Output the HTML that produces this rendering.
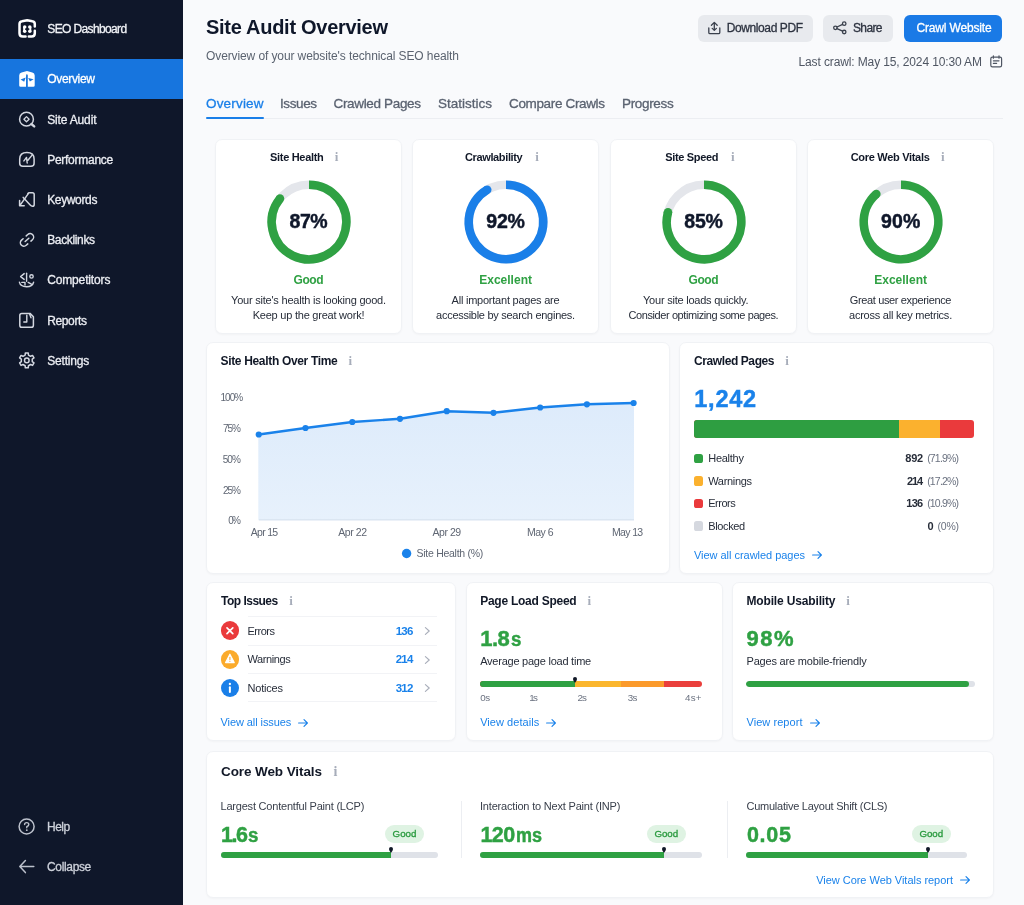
<!DOCTYPE html>
<html lang="en"><head><meta charset="utf-8"><title>SEO Dashboard - Site Audit Overview</title>
<style>
*{box-sizing:border-box;margin:0;padding:0}
html,body{width:1024px;height:905px;overflow:hidden}
body{will-change:transform;background:#f9fafc;font-family:"Liberation Sans",sans-serif;position:relative;color:#111827}
.t{position:absolute;white-space:pre;line-height:1;display:block}
.abs{position:absolute}
.md{-webkit-text-stroke:0.3px currentColor}
.hv{-webkit-text-stroke:0.45px currentColor}
svg{position:absolute;overflow:visible}
.sidebar{position:absolute;left:0;top:0;width:183px;height:905px;background:#0f172a}
.nav-active{position:absolute;left:0;top:59px;width:183px;height:40px;background:#1775de}
.card{position:absolute;background:#fff;border:1px solid #f0f2f5;border-radius:7px;box-shadow:0 1px 2px rgba(16,24,40,.03)}
.btn{position:absolute;top:14.5px;height:27.5px;border-radius:6px;background:#e8eaee}
.btn.primary{background:#1a7ae6}
.hr{position:absolute;height:1px;background:#f2f3f6}
.pill{position:absolute;height:17.5px;width:39px;border-radius:9px;background:#dff3e3}
.bar{position:absolute;height:5.5px;border-radius:3px;background:#dfe2e8;overflow:hidden}
.bar i{position:absolute;top:0;bottom:0;display:block}
</style></head><body>
<aside class="sidebar">
<div class="nav-active"></div>
<span class="t md" style="left:47.30px;top:23.00px;font-size:12px;color:#f1f3f7;letter-spacing:-0.633px;">SEO Dashboard</span>
<span class="t md" style="left:47.20px;top:73.00px;font-size:12px;color:#ffffff;letter-spacing:-0.317px;">Overview</span>
<span class="t md" style="left:47.20px;top:114.00px;font-size:12px;color:#eceef3;letter-spacing:-0.156px;">Site Audit</span>
<span class="t md" style="left:47.20px;top:154.00px;font-size:12px;color:#eceef3;letter-spacing:-0.270px;">Performance</span>
<span class="t md" style="left:47.20px;top:194.00px;font-size:12px;color:#eceef3;letter-spacing:-0.355px;">Keywords</span>
<span class="t md" style="left:47.20px;top:234.00px;font-size:12px;color:#eceef3;letter-spacing:-0.348px;">Backlinks</span>
<span class="t md" style="left:47.20px;top:274.00px;font-size:12px;color:#eceef3;letter-spacing:-0.149px;">Competitors</span>
<span class="t md" style="left:47.20px;top:315.00px;font-size:12px;color:#eceef3;letter-spacing:-0.372px;">Reports</span>
<span class="t md" style="left:47.20px;top:355.00px;font-size:12px;color:#eceef3;letter-spacing:-0.180px;">Settings</span>
<span class="t md" style="left:47.00px;top:821.00px;font-size:12px;color:#cdd1da;letter-spacing:-0.529px;">Help</span>
<span class="t md" style="left:47.00px;top:861.00px;font-size:12px;color:#cdd1da;letter-spacing:-0.343px;">Collapse</span>
<svg width="183" height="905" viewBox="0 0 183 905" fill="none" stroke="#d3d7e0" stroke-width="1.5" stroke-linecap="round" stroke-linejoin="round">
<!-- logo -->
<g stroke="#ffffff" stroke-width="2.5">
<path d="M34.8 26.6 V24 Q34.8 21.6 32.4 21.3 L27.2 20.2 L22 21.3 Q19.5 21.6 19.5 24 V33.2 Q19.5 36.5 22.8 36.5 H25.6"/>
<path d="M28.8 36.5 H31.6 Q34.8 36.5 34.8 33.2 V30.8"/>
</g>
<g fill="#ffffff" stroke="none">
<circle cx="24.7" cy="27" r="1.75"/><circle cx="24.7" cy="31.2" r="1.75"/><rect x="23.2" y="27" width="1.8" height="4.2"/>
<circle cx="29.8" cy="27" r="1.75"/><circle cx="29.8" cy="31.2" r="1.75"/><rect x="29.5" y="27" width="1.8" height="4.2"/>
</g>
<!-- overview (active) -->
<path d="M19.2 85.4 V75.6 Q19.2 73.1 21.6 72.5 L27 71 L32.3 72.5 Q34.7 73.1 34.7 75.6 V85.4 Q34.7 86.8 33.3 86.8 H20.6 Q19.2 86.8 19.2 85.4Z" fill="#ffffff" stroke="none"/>
<g fill="#1775de" stroke="none">
<path d="M26 75.6 Q26.9 72.4 27.8 75.6 V86.9 H26Z"/>
<path d="M20.6 79.4 L25.7 77.4 L24.2 81.8Z"/>
<path d="M33.6 79.3 L28.2 78.1 L29.9 81.4Z"/>
</g>
<!-- site audit -->
<circle cx="26.5" cy="119.2" r="6.9"/>
<path d="M26.5 116.6 L29.1 119.2 L26.5 121.8 L23.9 119.2Z" stroke-width="1.3"/>
<path d="M31.4 124 L34.2 126.4" stroke-width="2.4"/>
<!-- performance -->
<path d="M19.7 159 Q19.7 152.4 26.9 152.4 Q34.1 152.4 34.1 159 V163.2 Q34.1 166.2 31 166.2 H22.8 Q19.7 166.2 19.7 163.2Z"/>
<path d="M23.9 160.9 L26.5 157.4 L27.2 163 M27.9 160.3 L32.3 154.9" stroke-width="1.4"/>
<!-- keywords -->
<path d="M27.9 193.6 Q28.2 192.8 29.6 192.8 H32.4 Q34.2 192.8 34.2 194.6 V204.4 Q34.2 206.3 32.5 206.3 Q31.2 206.3 30.2 205.1 L23.2 197.4"/>
<path d="M28.3 193.6 L20 205.4 M19.6 200.6 V205.8 H24.2"/>
<!-- backlinks -->
<g transform="translate(27 239.9) rotate(-42) scale(0.7) translate(-12 -12)" stroke-width="2.15">
<path d="M15 7h3a5 5 0 0 1 5 5 5 5 0 0 1-5 5h-3m-6 0H6a5 5 0 0 1-5-5 5 5 0 0 1 5-5h3"/><path d="M8.5 12h7"/>
</g>
<!-- competitors -->
<g stroke-width="1.4">
<path d="M24.2 273.6 L20.6 276.6 L24.2 279.4"/>
<path d="M26.6 273.2 V281.2"/>
<circle cx="31.5" cy="276.4" r="1.7"/>
<path d="M19.4 282.2 Q20.4 286.8 26.6 286.8 Q32.4 286.8 33.6 282.2"/>
<path d="M21.8 282.4 H25 V285 M28.2 282.4 L31.4 284.2"/>
</g>
<!-- reports -->
<path d="M21.8 313.4 H30 L33.4 316.8 V325.2 Q33.4 327.3 31.3 327.3 H21.8 Q19.8 327.3 19.8 325.2 V315.4 Q19.8 313.4 21.8 313.4Z"/>
<path d="M26.8 315.2 V322 H23.8 M29.6 314 L31 317.8" stroke-width="1.4"/>
<!-- settings -->
<path d="M25.16 355.04 L25.35 352.94 L28.25 352.94 L28.44 355.04 L30.62 356.30 L32.54 355.41 L33.99 357.93 L32.26 359.14 L32.26 361.66 L33.99 362.87 L32.54 365.39 L30.62 364.50 L28.44 365.76 L28.25 367.86 L25.35 367.86 L25.16 365.76 L22.98 364.50 L21.06 365.39 L19.61 362.87 L21.34 361.66 L21.34 359.14 L19.61 357.93 L21.06 355.41 L22.98 356.30Z" stroke-width="1.5"/>
<circle cx="26.8" cy="360.4" r="2.3"/>
<!-- help -->
<g stroke="#bcc1cc">
<circle cx="26.6" cy="826.5" r="7.5"/>
<path d="M24.6 824.6 Q24.6 822.6 26.7 822.6 Q28.8 822.6 28.8 824.4 Q28.8 825.8 26.8 826.6 V827.8" stroke-width="1.4"/>
<circle cx="26.8" cy="830.2" r="0.9" fill="#bcc1cc" stroke="none"/>
<!-- collapse -->
<path d="M33.8 866.6 H20 M25.4 860.6 L19.8 866.6 L25.4 872.6"/>
</g>
</svg>
</aside>
<main>
<span class="t" style="left:206.00px;top:17.00px;font-size:20px;color:#0f172a;font-weight:700;letter-spacing:-0.283px;">Site Audit Overview</span>
<span class="t" style="left:206.00px;top:50.00px;font-size:12px;color:#5b6370;letter-spacing:-0.103px;">Overview of your website&#x27;s technical SEO health</span>
<div class="btn" style="left:698px;width:114.5px"></div>
<span class="t md" style="left:726.80px;top:22.00px;font-size:12px;color:#2d3340;letter-spacing:-0.409px;">Download PDF</span>
<div class="btn" style="left:823px;width:70px"></div>
<span class="t md" style="left:853.00px;top:22.00px;font-size:12px;color:#2d3340;letter-spacing:-0.633px;">Share</span>
<div class="btn primary" style="left:903.8px;width:98.7px"></div>
<span class="t md" style="left:916.50px;top:22.00px;font-size:12px;color:#ffffff;letter-spacing:-0.162px;">Crawl Website</span>
<span class="t" style="left:798.50px;top:56.00px;font-size:12px;color:#4f5663;letter-spacing:-0.123px;">Last crawl: May 15, 2024 10:30 AM</span>
<div class="hr" style="left:206px;top:118px;width:797px;background:#eceef2"></div>
<span class="t md" style="left:206.00px;top:97.00px;font-size:13.5px;color:#1a7fe8;letter-spacing:0.176px;">Overview</span>
<span class="t md" style="left:280.00px;top:97.00px;font-size:13.5px;color:#5a6270;letter-spacing:-0.406px;">Issues</span>
<span class="t md" style="left:333.50px;top:97.00px;font-size:13.5px;color:#5a6270;letter-spacing:-0.337px;">Crawled Pages</span>
<span class="t md" style="left:438.00px;top:97.00px;font-size:13.5px;color:#5a6270;">Statistics</span>
<span class="t md" style="left:509.00px;top:97.00px;font-size:13.5px;color:#5a6270;letter-spacing:-0.349px;">Compare Crawls</span>
<span class="t md" style="left:622.00px;top:97.00px;font-size:13.5px;color:#5a6270;letter-spacing:-0.333px;">Progress</span>
<div class="abs" style="left:206px;top:116.5px;width:58px;height:2px;background:#1a7fe8;border-radius:1px"></div>
<svg width="320" height="60" viewBox="690 10 320 60" style="left:690px;top:10px" fill="none" stroke="#3a404c" stroke-width="1.3" stroke-linecap="round" stroke-linejoin="round">
<path d="M708.8 28 V32.4 Q708.8 33.6 710 33.6 H718.6 Q719.8 33.6 719.8 32.4 V28"/>
<path d="M714.3 22.6 V30.2 M711.4 25.2 L714.3 22.4 L717.2 25.2 M712.2 28.4 L714.3 30.4 L716.4 28.4"/>
<circle cx="835.4" cy="27.8" r="1.75"/><circle cx="844.2" cy="23.7" r="1.75"/><circle cx="844.2" cy="32" r="1.75"/>
<path d="M837 27 L842.6 24.4 M837 28.6 L842.6 31.2"/>
<g stroke="#4f5663" stroke-width="1.2">
<rect x="990.8" y="57.2" width="10.8" height="9.6" rx="1.6"/>
<path d="M993.4 55.8 V58.2 M999 55.8 V58.2 M993.4 60.8 H999 M993.4 63.4 H996.6"/>
</g>
</svg>
<section class="card" style="left:215px;top:139px;width:187px;height:195px"></section>
<span class="t" style="left:270.00px;top:152.00px;font-size:11px;color:#111827;font-weight:700;letter-spacing:-0.306px;">Site Health</span>
<span class="t" style="left:334.70px;top:150.00px;font-size:13px;color:#a7adba;font-weight:700;font-family:'Liberation Serif',serif;">i</span>
<svg width="90" height="90" viewBox="263.60 176.60 90 90" style="left:263.60px;top:176.60px" fill="none"><circle cx="308.60" cy="221.6" r="37.3" stroke="#e4e6eb" stroke-width="8.4"/><path d="M308.60 184.30 A37.3 37.3 0 1 1 279.56 198.19" stroke="#2fa143" stroke-width="8.6"/><circle cx="279.56" cy="198.19" r="4.3" fill="#2fa143"/></svg>
<span class="t hv" style="left:289.50px;top:212.00px;font-size:19.5px;color:#0f172a;font-weight:700;letter-spacing:-0.416px;">87%</span>
<span class="t" style="left:293.60px;top:274.00px;font-size:12px;color:#2fa143;font-weight:700;letter-spacing:-0.443px;">Good</span>
<span class="t" style="left:231.10px;top:295.00px;font-size:11px;color:#272d39;letter-spacing:-0.222px;">Your site&#x27;s health is looking good.</span>
<span class="t" style="left:252.70px;top:310.00px;font-size:11px;color:#272d39;letter-spacing:-0.227px;">Keep up the great work!</span>
<section class="card" style="left:412px;top:139px;width:187px;height:195px"></section>
<span class="t" style="left:465.00px;top:152.00px;font-size:11px;color:#111827;font-weight:700;letter-spacing:-0.368px;">Crawlability</span>
<span class="t" style="left:535.20px;top:150.00px;font-size:13px;color:#a7adba;font-weight:700;font-family:'Liberation Serif',serif;">i</span>
<svg width="90" height="90" viewBox="460.60 176.60 90 90" style="left:460.60px;top:176.60px" fill="none"><circle cx="505.60" cy="221.6" r="37.3" stroke="#e4e6eb" stroke-width="8.4"/><path d="M505.60 184.30 A37.3 37.3 0 1 1 486.81 189.38" stroke="#1a7fe8" stroke-width="8.6"/><circle cx="486.81" cy="189.38" r="4.3" fill="#1a7fe8"/></svg>
<span class="t hv" style="left:486.30px;top:212.00px;font-size:19.5px;color:#0f172a;font-weight:700;letter-spacing:-0.216px;">92%</span>
<span class="t" style="left:479.20px;top:274.00px;font-size:12px;color:#2fa143;font-weight:700;letter-spacing:0.012px;">Excellent</span>
<span class="t" style="left:451.60px;top:295.00px;font-size:11px;color:#272d39;letter-spacing:-0.233px;">All important pages are</span>
<span class="t" style="left:436.10px;top:310.00px;font-size:11px;color:#272d39;letter-spacing:-0.277px;">accessible by search engines.</span>
<section class="card" style="left:610px;top:139px;width:187px;height:195px"></section>
<span class="t" style="left:665.30px;top:152.00px;font-size:11px;color:#111827;font-weight:700;letter-spacing:-0.339px;">Site Speed</span>
<span class="t" style="left:731.00px;top:150.00px;font-size:13px;color:#a7adba;font-weight:700;font-family:'Liberation Serif',serif;">i</span>
<svg width="90" height="90" viewBox="658.60 176.60 90 90" style="left:658.60px;top:176.60px" fill="none"><circle cx="703.60" cy="221.6" r="37.3" stroke="#e4e6eb" stroke-width="8.4"/><path d="M703.60 184.30 A37.3 37.3 0 1 1 667.59 211.87" stroke="#2fa143" stroke-width="8.6"/><circle cx="667.59" cy="211.87" r="4.3" fill="#2fa143"/></svg>
<span class="t hv" style="left:684.30px;top:212.00px;font-size:19.5px;color:#0f172a;font-weight:700;letter-spacing:-0.216px;">85%</span>
<span class="t" style="left:688.60px;top:274.00px;font-size:12px;color:#2fa143;font-weight:700;letter-spacing:-0.443px;">Good</span>
<span class="t" style="left:643.00px;top:295.00px;font-size:11px;color:#272d39;letter-spacing:-0.225px;">Your site loads quickly.</span>
<span class="t" style="left:628.60px;top:310.00px;font-size:11px;color:#272d39;letter-spacing:-0.421px;">Consider optimizing some pages.</span>
<section class="card" style="left:807px;top:139px;width:187px;height:195px"></section>
<span class="t" style="left:850.70px;top:152.00px;font-size:11px;color:#111827;font-weight:700;letter-spacing:-0.303px;">Core Web Vitals</span>
<span class="t" style="left:941.00px;top:150.00px;font-size:13px;color:#a7adba;font-weight:700;font-family:'Liberation Serif',serif;">i</span>
<svg width="90" height="90" viewBox="855.60 176.60 90 90" style="left:855.60px;top:176.60px" fill="none"><circle cx="900.60" cy="221.6" r="37.3" stroke="#e4e6eb" stroke-width="8.4"/><path d="M900.60 184.30 A37.3 37.3 0 1 1 875.93 193.62" stroke="#2fa143" stroke-width="8.6"/><circle cx="875.93" cy="193.62" r="4.3" fill="#2fa143"/></svg>
<span class="t hv" style="left:880.90px;top:212.00px;font-size:19.5px;color:#0f172a;font-weight:700;letter-spacing:0.184px;">90%</span>
<span class="t" style="left:874.20px;top:274.00px;font-size:12px;color:#2fa143;font-weight:700;letter-spacing:0.012px;">Excellent</span>
<span class="t" style="left:849.70px;top:295.00px;font-size:11px;color:#272d39;letter-spacing:-0.352px;">Great user experience</span>
<span class="t" style="left:849.00px;top:310.00px;font-size:11px;color:#272d39;letter-spacing:-0.227px;">across all key metrics.</span>
<section class="card" style="left:206px;top:342px;width:464px;height:232px"></section>
<span class="t" style="left:220.50px;top:355.00px;font-size:12px;color:#111827;font-weight:700;letter-spacing:-0.331px;">Site Health Over Time</span>
<span class="t" style="left:348.50px;top:354.00px;font-size:13px;color:#a7adba;font-weight:700;font-family:'Liberation Serif',serif;">i</span>
<span class="t" style="left:220.50px;top:393.00px;font-size:10px;color:#5f6673;letter-spacing:-0.959px;">100%</span>
<span class="t" style="left:223.00px;top:424.00px;font-size:10px;color:#5f6673;letter-spacing:-1.108px;">75%</span>
<span class="t" style="left:222.80px;top:455.00px;font-size:10px;color:#5f6673;letter-spacing:-1.008px;">50%</span>
<span class="t" style="left:223.00px;top:486.00px;font-size:10px;color:#5f6673;letter-spacing:-1.108px;">25%</span>
<span class="t" style="left:228.20px;top:516.00px;font-size:10px;color:#5f6673;letter-spacing:-1.853px;">0%</span>
<svg width="1024" height="905" viewBox="0 0 1024 905" style="left:0;top:0" fill="none"><defs><linearGradient id="ga" x1="0" y1="400" x2="0" y2="520" gradientUnits="userSpaceOnUse"><stop offset="0" stop-color="#ddebfb"/><stop offset="1" stop-color="#e7f1fc"/></linearGradient></defs><path d="M258.3 434.6 L258.75 434.5 L305.5 428 L352.3 422 L400 418.8 L446.75 411.2 L493.5 412.8 L540.2 407.5 L586.9 404.3 L633.6 403 L634 403 L634 519.8 L258.3 519.8Z" fill="url(#ga)"/><path d="M258.75 519.9 H634" stroke="#cfdcec" stroke-width="1"/><path d="M258.75 434.5 L305.5 428 L352.3 422 L400 418.8 L446.75 411.2 L493.5 412.8 L540.2 407.5 L586.9 404.3 L633.6 403" stroke="#1a82ea" stroke-width="2.4" stroke-linejoin="round" stroke-linecap="round"/><g fill="#1a82ea"><circle cx="258.75" cy="434.5" r="3.1"/><circle cx="305.5" cy="428" r="3.1"/><circle cx="352.3" cy="422" r="3.1"/><circle cx="400" cy="418.8" r="3.1"/><circle cx="446.75" cy="411.2" r="3.1"/><circle cx="493.5" cy="412.8" r="3.1"/><circle cx="540.2" cy="407.5" r="3.1"/><circle cx="586.9" cy="404.3" r="3.1"/><circle cx="633.6" cy="403" r="3.1"/></g><circle cx="406.6" cy="553.5" r="4.7" fill="#1a82ea"/></svg>
<span class="t" style="left:250.80px;top:527.00px;font-size:10.5px;color:#5f6673;letter-spacing:-0.708px;">Apr 15</span>
<span class="t" style="left:338.20px;top:527.00px;font-size:10.5px;color:#5f6673;letter-spacing:-0.427px;">Apr 22</span>
<span class="t" style="left:432.50px;top:527.00px;font-size:10.5px;color:#5f6673;letter-spacing:-0.448px;">Apr 29</span>
<span class="t" style="left:527.00px;top:527.00px;font-size:10.5px;color:#5f6673;letter-spacing:-0.523px;">May 6</span>
<span class="t" style="left:612.00px;top:527.00px;font-size:10.5px;color:#5f6673;letter-spacing:-0.647px;">May 13</span>
<span class="t" style="left:416.50px;top:548.00px;font-size:10.5px;color:#5f6673;letter-spacing:-0.272px;">Site Health (%)</span>
<section class="card" style="left:679px;top:342px;width:315px;height:232px"></section>
<span class="t" style="left:694.00px;top:355.00px;font-size:12px;color:#111827;font-weight:700;letter-spacing:-0.406px;">Crawled Pages</span>
<span class="t" style="left:785.20px;top:354.00px;font-size:13px;color:#a7adba;font-weight:700;font-family:'Liberation Serif',serif;">i</span>
<span class="t hv" style="left:694.20px;top:388.00px;font-size:23.5px;color:#1a82ea;font-weight:700;letter-spacing:0.797px;">1,242</span>
<div class="abs" style="left:694px;top:420px;width:280px;height:18px;border-radius:3px;overflow:hidden;background:#ea3a3c"><i class="abs" style="left:0;top:0;height:18px;width:204.8px;background:#2e9e41"></i><i class="abs" style="left:204.8px;top:0;height:18px;width:41.2px;background:#fbb12e"></i></div>
<i class="abs" style="left:694px;top:453.9px;width:9.2px;height:9.2px;border-radius:2.6px;background:#2fa143"></i>
<span class="t" style="left:708.20px;top:453.00px;font-size:11px;color:#272d39;letter-spacing:-0.249px;">Healthy</span>
<span class="t" style="left:905.20px;top:453.00px;font-size:11px;color:#272d39;font-weight:700;letter-spacing:-0.180px;">892</span>
<span class="t" style="left:927.20px;top:453.00px;font-size:10.5px;color:#6b7280;letter-spacing:-0.828px;">(71.9%)</span>
<i class="abs" style="left:694px;top:476.4px;width:9.2px;height:9.2px;border-radius:2.6px;background:#fbb12e"></i>
<span class="t" style="left:708.20px;top:476.00px;font-size:11px;color:#272d39;letter-spacing:-0.323px;">Warnings</span>
<span class="t" style="left:907.00px;top:476.00px;font-size:11px;color:#272d39;font-weight:700;letter-spacing:-1.080px;">214</span>
<span class="t" style="left:927.20px;top:476.00px;font-size:10.5px;color:#6b7280;letter-spacing:-0.828px;">(17.2%)</span>
<i class="abs" style="left:694px;top:498.9px;width:9.2px;height:9.2px;border-radius:2.6px;background:#ea3a3c"></i>
<span class="t" style="left:708.20px;top:498.00px;font-size:11px;color:#272d39;letter-spacing:-0.471px;">Errors</span>
<span class="t" style="left:906.20px;top:498.00px;font-size:11px;color:#272d39;font-weight:700;letter-spacing:-0.680px;">136</span>
<span class="t" style="left:927.20px;top:498.00px;font-size:10.5px;color:#6b7280;letter-spacing:-0.828px;">(10.9%)</span>
<i class="abs" style="left:694px;top:521.4px;width:9.2px;height:9.2px;border-radius:2.6px;background:#d5d8df"></i>
<span class="t" style="left:708.20px;top:521.00px;font-size:11px;color:#272d39;letter-spacing:-0.357px;">Blocked</span>
<span class="t" style="left:927.50px;top:521.00px;font-size:11px;color:#272d39;font-weight:700;">0</span>
<span class="t" style="left:937.50px;top:521.00px;font-size:10.5px;color:#6b7280;letter-spacing:-0.224px;">(0%)</span>
<span class="t" style="left:694.00px;top:550.00px;font-size:11px;color:#1a82ea;letter-spacing:-0.033px;">View all crawled pages</span>
<svg width="12" height="10" viewBox="0 0 12 10" style="left:811.6px;top:550.3px" fill="none" stroke="#1a82ea" stroke-width="1.15" stroke-linecap="round" stroke-linejoin="round"><path d="M0.6 5 H9.2 M6.0 1.6 L9.4 5 L6.0 8.4"/></svg>
<section class="card" style="left:206px;top:582px;width:250px;height:159px"></section>
<span class="t" style="left:221.00px;top:595.00px;font-size:12px;color:#111827;font-weight:700;letter-spacing:-0.511px;">Top Issues</span>
<span class="t" style="left:289.20px;top:594.00px;font-size:13px;color:#a7adba;font-weight:700;font-family:'Liberation Serif',serif;">i</span>
<div class="hr" style="left:247.5px;top:615.5px;width:189px"></div>
<div class="hr" style="left:247.5px;top:644.5px;width:189px"></div>
<div class="hr" style="left:247.5px;top:673.0px;width:189px"></div>
<div class="hr" style="left:247.5px;top:701.3px;width:189px"></div>
<i class="abs" style="left:220.5px;top:621.4px;width:18.8px;height:18.8px;border-radius:50%;background:#ea3a3c"></i>
<span class="t" style="left:247.50px;top:626.00px;font-size:11px;color:#272d39;letter-spacing:-0.491px;">Errors</span>
<span class="t" style="left:395.80px;top:626.00px;font-size:11.5px;color:#1a82ea;font-weight:700;letter-spacing:-0.844px;">136</span>
<svg width="8" height="10" viewBox="0 0 8 10" style="left:423.6px;top:625.8px" fill="none" stroke="#a9aeba" stroke-width="1.15" stroke-linecap="round" stroke-linejoin="round"><path d="M1.4 1.6 L5.2 5 L1.4 8.4"/></svg>
<i class="abs" style="left:220.5px;top:650.1px;width:18.8px;height:18.8px;border-radius:50%;background:#fbab2b"></i>
<span class="t" style="left:247.50px;top:654.00px;font-size:11px;color:#272d39;letter-spacing:-0.395px;">Warnings</span>
<span class="t" style="left:395.80px;top:654.00px;font-size:11.5px;color:#1a82ea;font-weight:700;letter-spacing:-0.844px;">214</span>
<svg width="8" height="10" viewBox="0 0 8 10" style="left:423.6px;top:654.5px" fill="none" stroke="#a9aeba" stroke-width="1.15" stroke-linecap="round" stroke-linejoin="round"><path d="M1.4 1.6 L5.2 5 L1.4 8.4"/></svg>
<i class="abs" style="left:220.5px;top:678.6px;width:18.8px;height:18.8px;border-radius:50%;background:#1a7fe8"></i>
<span class="t" style="left:247.50px;top:683.00px;font-size:11px;color:#272d39;letter-spacing:-0.198px;">Notices</span>
<span class="t" style="left:395.80px;top:683.00px;font-size:11.5px;color:#1a82ea;font-weight:700;letter-spacing:-0.844px;">312</span>
<svg width="8" height="10" viewBox="0 0 8 10" style="left:423.6px;top:683.0px" fill="none" stroke="#a9aeba" stroke-width="1.15" stroke-linecap="round" stroke-linejoin="round"><path d="M1.4 1.6 L5.2 5 L1.4 8.4"/></svg>
<svg width="20" height="80" viewBox="220 620 20 80" style="left:220px;top:620px" fill="none" stroke="#fff" stroke-width="1.7" stroke-linecap="round"><path d="M227 627.9 L232.8 633.7 M232.8 627.9 L227 633.7"/><path d="M229.9 654.2 L234.2 662.6 H225.6Z" fill="#fff" stroke-width="1.2" stroke-linejoin="round"/><path d="M229.9 657.4 V659.6" stroke="#fbab2b" stroke-width="1.1"/><circle cx="229.9" cy="661.3" r="0.6" fill="#fbab2b" stroke="none"/><circle cx="229.9" cy="684" r="1.15" fill="#fff" stroke="none"/><path d="M229.9 687.2 V692" stroke-width="2"/></svg>
<span class="t" style="left:220.50px;top:717.00px;font-size:11px;color:#1a82ea;letter-spacing:-0.082px;">View all issues</span>
<svg width="12" height="10" viewBox="0 0 12 10" style="left:298px;top:717.6px" fill="none" stroke="#1a82ea" stroke-width="1.15" stroke-linecap="round" stroke-linejoin="round"><path d="M0.6 5 H9.2 M6.0 1.6 L9.4 5 L6.0 8.4"/></svg>
<section class="card" style="left:466px;top:582px;width:257px;height:159px"></section>
<span class="t" style="left:480.20px;top:595.00px;font-size:12px;color:#111827;font-weight:700;letter-spacing:-0.252px;">Page Load Speed</span>
<span class="t" style="left:587.50px;top:594.00px;font-size:13px;color:#a7adba;font-weight:700;font-family:'Liberation Serif',serif;">i</span>
<span class="t hv" style="left:480.20px;top:628.00px;font-size:22px;color:#2fa143;font-weight:700;letter-spacing:-0.497px;">1.8</span>
<span class="t hv" style="left:511.00px;top:630.00px;font-size:19.5px;color:#2fa143;font-weight:700;transform:scaleX(0.9577);transform-origin:0 0;">s</span>
<span class="t" style="left:480.20px;top:656.00px;font-size:11px;color:#272d39;letter-spacing:-0.238px;">Average page load time</span>
<div class="bar" style="left:479.8px;top:681.2px;width:222.5px;background:#ea3f3c"><i style="left:0;width:94.8px;background:#2fa143"></i><i style="left:94.8px;width:46.5px;background:#fbb62d"></i><i style="left:141.3px;width:43px;background:#fb9a2b"></i></div>
<svg width="6" height="6" viewBox="0 0 6 6" style="left:571.60px;top:676.60px"><path d="M1 2.1 A2 2 0 0 1 5 2.1 Q5 3.3 3.4 5.4 H2.6 Q1 3.3 1 2.1Z" fill="#111827"/></svg>
<span class="t" style="left:480.20px;top:693.00px;font-size:9.8px;color:#6b7280;letter-spacing:-0.359px;">0s</span>
<span class="t" style="left:529.20px;top:693.00px;font-size:9.8px;color:#6b7280;letter-spacing:-1.559px;">1s</span>
<span class="t" style="left:577.50px;top:693.00px;font-size:9.8px;color:#6b7280;letter-spacing:-0.859px;">2s</span>
<span class="t" style="left:627.80px;top:693.00px;font-size:9.8px;color:#6b7280;letter-spacing:-0.659px;">3s</span>
<span class="t" style="left:685.00px;top:693.00px;font-size:9.8px;color:#6b7280;letter-spacing:0.211px;">4s+</span>
<span class="t" style="left:480.20px;top:717.00px;font-size:11px;color:#1a82ea;letter-spacing:0.045px;">View details</span>
<svg width="12" height="10" viewBox="0 0 12 10" style="left:546px;top:717.6px" fill="none" stroke="#1a82ea" stroke-width="1.15" stroke-linecap="round" stroke-linejoin="round"><path d="M0.6 5 H9.2 M6.0 1.6 L9.4 5 L6.0 8.4"/></svg>
<section class="card" style="left:732px;top:582px;width:262px;height:159px"></section>
<span class="t" style="left:746.50px;top:595.00px;font-size:12px;color:#111827;font-weight:700;letter-spacing:-0.157px;">Mobile Usability</span>
<span class="t" style="left:846.20px;top:594.00px;font-size:13px;color:#a7adba;font-weight:700;font-family:'Liberation Serif',serif;">i</span>
<span class="t hv" style="left:746.50px;top:628.00px;font-size:22px;color:#2fa143;font-weight:700;letter-spacing:1.477px;">98%</span>
<span class="t" style="left:746.50px;top:656.00px;font-size:11px;color:#272d39;letter-spacing:-0.189px;">Pages are mobile-friendly</span>
<div class="bar" style="left:746px;top:681.2px;width:228.5px"><i style="left:0;width:223.2px;background:#2fa143;border-radius:3px"></i></div>
<span class="t" style="left:746.50px;top:717.00px;font-size:11px;color:#1a82ea;letter-spacing:0.056px;">View report</span>
<svg width="12" height="10" viewBox="0 0 12 10" style="left:809.5px;top:717.6px" fill="none" stroke="#1a82ea" stroke-width="1.15" stroke-linecap="round" stroke-linejoin="round"><path d="M0.6 5 H9.2 M6.0 1.6 L9.4 5 L6.0 8.4"/></svg>
<section class="card" style="left:206px;top:751px;width:788px;height:147px"></section>
<span class="t" style="left:221.00px;top:765.00px;font-size:13.5px;color:#111827;font-weight:700;letter-spacing:-0.093px;">Core Web Vitals</span>
<span class="t" style="left:333.50px;top:765.00px;font-size:14px;color:#a7adba;font-weight:700;font-family:'Liberation Serif',serif;">i</span>
<span class="t" style="left:220.50px;top:801.00px;font-size:11px;color:#3a404c;letter-spacing:-0.207px;">Largest Contentful Paint (LCP)</span>
<span class="t hv" style="left:220.90px;top:825.00px;font-size:21.5px;color:#2fa143;font-weight:700;letter-spacing:-1.445px;">1.6</span>
<span class="t hv" style="left:248.20px;top:826.00px;font-size:19.5px;color:#2fa143;font-weight:700;transform:scaleX(0.9577);transform-origin:0 0;">s</span>
<div class="pill" style="left:385px;top:825.2px"></div>
<span class="t md" style="left:392.60px;top:829.00px;font-size:9.75px;color:#2a9a3f;letter-spacing:-0.020px;">Good</span>
<div class="bar" style="left:220.5px;top:852px;width:217px"><i style="left:0;width:170.8px;background:#2fa143"></i></div>
<svg width="6" height="6" viewBox="0 0 6 6" style="left:387.90px;top:847.40px"><path d="M1 2.1 A2 2 0 0 1 5 2.1 Q5 3.3 3.4 5.4 H2.6 Q1 3.3 1 2.1Z" fill="#111827"/></svg>
<span class="t" style="left:480.00px;top:801.00px;font-size:11px;color:#3a404c;letter-spacing:-0.191px;">Interaction to Next Paint (INP)</span>
<span class="t hv" style="left:480.40px;top:825.00px;font-size:21.5px;color:#2fa143;font-weight:700;letter-spacing:-0.538px;">120</span>
<span class="t hv" style="left:516.40px;top:826.00px;font-size:19.5px;color:#2fa143;font-weight:700;transform:scaleX(0.9224);transform-origin:0 0;">ms</span>
<div class="pill" style="left:646.8px;top:825.2px"></div>
<span class="t md" style="left:654.40px;top:829.00px;font-size:9.75px;color:#2a9a3f;letter-spacing:-0.020px;">Good</span>
<div class="bar" style="left:479.8px;top:852px;width:221.8px"><i style="left:0;width:184.2px;background:#2fa143"></i></div>
<svg width="6" height="6" viewBox="0 0 6 6" style="left:660.60px;top:847.40px"><path d="M1 2.1 A2 2 0 0 1 5 2.1 Q5 3.3 3.4 5.4 H2.6 Q1 3.3 1 2.1Z" fill="#111827"/></svg>
<span class="t" style="left:746.50px;top:801.00px;font-size:11px;color:#3a404c;letter-spacing:-0.248px;">Cumulative Layout Shift (CLS)</span>
<span class="t hv" style="left:746.90px;top:825.00px;font-size:21.5px;color:#2fa143;font-weight:700;letter-spacing:0.714px;">0.05</span>
<div class="pill" style="left:911.8px;top:825.2px"></div>
<span class="t md" style="left:919.40px;top:829.00px;font-size:9.75px;color:#2a9a3f;letter-spacing:-0.020px;">Good</span>
<div class="bar" style="left:746px;top:852px;width:220.8px"><i style="left:0;width:182px;background:#2fa143"></i></div>
<svg width="6" height="6" viewBox="0 0 6 6" style="left:924.60px;top:847.40px"><path d="M1 2.1 A2 2 0 0 1 5 2.1 Q5 3.3 3.4 5.4 H2.6 Q1 3.3 1 2.1Z" fill="#111827"/></svg>
<div class="abs" style="left:461px;top:801px;width:1px;height:56.5px;background:#eceef2"></div>
<div class="abs" style="left:726.5px;top:801px;width:1px;height:56.5px;background:#eceef2"></div>
<span class="t" style="left:816.20px;top:875.00px;font-size:11px;color:#1a82ea;letter-spacing:-0.030px;">View Core Web Vitals report</span>
<svg width="12" height="10" viewBox="0 0 12 10" style="left:959.5px;top:875.2px" fill="none" stroke="#1a82ea" stroke-width="1.15" stroke-linecap="round" stroke-linejoin="round"><path d="M0.6 5 H9.2 M6.0 1.6 L9.4 5 L6.0 8.4"/></svg>
</main>
</body></html>
